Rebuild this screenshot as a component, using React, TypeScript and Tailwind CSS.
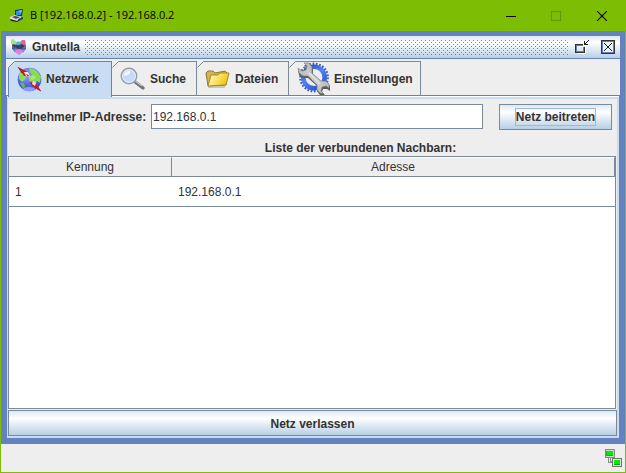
import { useState } from "react";
import type { ReactNode } from "react";

const LaptopIcon = () => (
  <svg width="16" height="16" viewBox="0 0 16 16" aria-hidden="true">
    <path d="M6 2 14 1 13 8 6 8Z" fill="#17365c" />
    <path d="M7 3 13 2 12 7 7 7Z" fill="#2f8fe0" />
    <path d="M9 3 13 2 12 5Z" fill="#7cc4f7" />
    <path d="M1 9 6 7 13 9 8 13 1 11Z" fill="#d9dbe0" />
    <path d="M3 9 6 8 11 9 7 11Z" fill="#4a4a55" />
    <path d="M1 11 8 13 13 9 13 11 8 14 2 13Z" fill="#24242c" />
    <path d="M9 11 14 9 14 11 10 13Z" fill="#16508c" />
  </svg>
);

const GnutellaIcon = () => (
  <svg width="16" height="16" viewBox="0 0 16 16" aria-hidden="true">
    <path d="M1 5 4 4 12 4 15 6 15 10 12 13 4 13 1 10Z" fill="#4a659c" />
    <path d="M0 1 2 0 6 3 6 5 3 6 0 5Z" fill="#a2e394" />
    <path d="M9 3 11 1 14 1 15 5 12 6 9 5Z" fill="#dc6a92" />
    <path d="M5 4 7 2 10 4 8 6 6 6Z" fill="#4fbfc4" />
    <path d="M2 9V6H4V8H2M6 6V10M6 8H8M8 6V10M10 10V6H12V8H10" stroke="#242d55" fill="none" />
    <path d="M1 8H3M13 8H15M4 10H6" stroke="#bd5078" strokeWidth="1.6" />
    <path d="M2 10 5 11 4 14Z" fill="#6f8ed6" />
    <path d="M11 11 14 10 12 14Z" fill="#5e9ab5" />
    <path d="M4 11 8 10 12 11 11 14 8 16 5 14Z" fill="#d981e4" />
  </svg>
);

const GlobeIcon = () => (
  <svg width="26" height="28" viewBox="0 0 26 28" aria-hidden="true">
    <defs>
      <radialGradient id="sea" cx="0.4" cy="0.3" r="0.75">
        <stop offset="0" stopColor="#9aa8fb" />
        <stop offset="0.55" stopColor="#5866ea" />
        <stop offset="1" stopColor="#3c47c8" />
      </radialGradient>
    </defs>
    <circle cx="12.5" cy="14.5" r="11.8" fill="url(#sea)" />
    <ellipse cx="12" cy="24" rx="6" ry="2" fill="#8b9bf8" />
    <path d="M2 9 6 5 10 6 11 9 9 11 8 15 5 17 2 14Z" fill="#86dc52" />
    <path d="M12 3 17 4 21 7 24 12 23 18 20 16 18 20 16 17 12 16 12 12 15 10 13 7Z" fill="#86dc52" />
    <path d="M3 18 7 18 8 22 6 23Z" fill="#68bf43" />
    <path d="M13 12 17 10 19 13 15 15Z" fill="#a6e87b" />
    <path d="M1 2 11 7 12 11 7 11Z" fill="#d81414" />
    <path d="M7 7 11 7 13 12 9 11Z" fill="#f6e9e7" />
    <path d="M9 9 12 10 11 12Z" fill="#d22" />
    <path d="M24 26 15 21 13 17 19 18Z" fill="#d81414" />
    <path d="M16 16 19 18 18 21 15 19Z" fill="#f6e9e7" />
    <path d="M1 2 5 8M20 24 24 26" stroke="#7c1720" strokeWidth="0.8" />
  </svg>
);

const LensIcon = () => (
  <svg width="26" height="24" viewBox="0 0 26 24" aria-hidden="true">
    <path d="M14 14 23 21" stroke="#747474" strokeWidth="3.4" strokeLinecap="round" />
    <path d="M14 13 22 19" stroke="#c4c4c4" strokeWidth="1.3" />
    <circle cx="9" cy="9" r="7.7" fill="#c5dbf8" stroke="#969da6" strokeWidth="1.5" />
    <circle cx="9" cy="9" r="6.3" fill="none" stroke="#e9f2fd" />
    <path d="M4 9A5 5 0 0 1 10 4Q11 8 4 9Z" fill="#f3f8ff" />
  </svg>
);

const FolderIcon = () => (
  <svg width="26" height="20" viewBox="0 0 26 20" aria-hidden="true">
    <defs>
      <linearGradient id="folder" x1="0" y1="0" x2="1" y2="0.4">
        <stop offset="0" stopColor="#fffbd0" />
        <stop offset="0.6" stopColor="#fbe05a" />
        <stop offset="1" stopColor="#f0c419" />
      </linearGradient>
    </defs>
    <path d="M3 17 1 4 3 2 8 2 10 4 20 2 22 4 21 16Z" fill="#cfb45a" stroke="#8f7a35" />
    <path d="M3 17 6 6 13 6 15 4 24 4 21 16Z" fill="url(#folder)" stroke="#a98a22" />
    <path d="M3 18 20 18" stroke="#a5a08c" />
  </svg>
);

const GearIcon = () => (
  <svg width="34" height="34" viewBox="0 0 34 34" aria-hidden="true">
    <defs>
      <linearGradient id="gear" x1="0" y1="0" x2="0.7" y2="1">
        <stop offset="0" stopColor="#2447ac" />
        <stop offset="0.5" stopColor="#5585f3" />
        <stop offset="1" stopColor="#2a57d0" />
      </linearGradient>
      <linearGradient id="steel" x1="0" y1="1" x2="1" y2="0">
        <stop offset="0" stopColor="#8b8b8b" />
        <stop offset="0.5" stopColor="#cccccc" />
        <stop offset="1" stopColor="#969696" />
      </linearGradient>
    </defs>
    <circle cx="17" cy="15.5" r="13.7" fill="none" stroke="#3a5db8" strokeWidth="2.4" strokeDasharray="1.7 1.6" />
    <circle cx="17" cy="15.5" r="10.7" fill="none" stroke="url(#gear)" strokeWidth="4.6" />
    <path
      d="M7 3 12 3 16 7 16 12 24 20 29 20 33 24 33 29 30 27 26 27 25 30 28 33 23 33 20 29 20 24 11 16 6 16 2 13 1 8 5 11 9 10 10 6Z"
      fill="#5c5c5c"
    />
    <path
      d="M7 1 12 1 15 5 15 11 24 19 29 19 32 22 32 26 29 24 25 25 24 29 27 32 23 31 20 28 20 23 11 14 6 14 2 11 1 6 5 9 9 8 10 4Z"
      fill="url(#steel)"
      stroke="#808080"
      strokeWidth="0.7"
    />
    <path d="M12 11 23 22" stroke="#e4e4e4" strokeWidth="1.5" />
  </svg>
);

const NetworkStatusIcon = () => (
  <svg width="18" height="18" viewBox="0 0 18 18" shapeRendering="crispEdges" role="img" aria-label="Verbunden">
    <path d="M3 9h1v4h3v1h-4zM5 9h1v3h2v1h-3z" fill="#8a8a8a" />
    <rect width="10" height="9" fill="#8a8a8a" />
    <rect x="1" y="1" width="8" height="7" fill="#d4d4d4" />
    <rect x="1" y="2" width="7" height="5" fill="#12b012" />
    <rect x="2" y="2" width="6" height="4" fill="#00ee00" />
    <rect x="7" y="9" width="10" height="9" fill="#707070" />
    <rect x="8" y="10" width="8" height="7" fill="#e3e3e3" />
    <rect x="9" y="11" width="6" height="5" fill="#0a0" />
    <rect x="9" y="11" width="6" height="4" fill="#00ee00" />
  </svg>
);

type TabItem = { name: string; icon: ReactNode; size: string };

const tabs: TabItem[] = [
  { name: "Netzwerk", icon: <GlobeIcon />, size: "w-[104px] gap-[3px]" },
  { name: "Suche", icon: <LensIcon />, size: "w-[85px] gap-1" },
  { name: "Dateien", icon: <FolderIcon />, size: "w-[92px] gap-1" },
  { name: "Einstellungen", icon: <GearIcon />, size: "w-[132px] gap-[3px]" },
];

const neighbours = [{ id: "1", address: "192.168.0.1" }];

const steel =
  "border border-[#7a8a99] bg-linear-to-b from-[#dde8f3] via-white via-30% to-[#b8cfe5] font-bold";

export default function App() {
  const [active, setActive] = useState("Netzwerk");
  const [ip, setIp] = useState("192.168.0.1");

  return (
    <div className="flex min-h-screen flex-col border-x border-b border-[#7dbe05] bg-[#eeeeee] font-['Liberation_Sans',Arial,sans-serif] text-xs text-[#333333]">
      <header className="flex h-[31px] items-center bg-[#7dbe05] pl-2 font-['Open_Sans',sans-serif] text-black">
        <LaptopIcon />
        <h1 className="flex-1 pl-[5px] text-[11px]">B [192.168.0.2] - 192.168.0.2</h1>
        <button aria-label="Minimieren" className="flex h-full w-[45px] items-center justify-center">
          <svg width="10" height="10" shapeRendering="crispEdges"><path d="M0 5.5H10" stroke="#000" /></svg>
        </button>
        <button aria-label="Maximieren" disabled className="flex h-full w-[45px] items-center justify-center">
          <svg width="10" height="10" shapeRendering="crispEdges"><rect x="0.5" y="0.5" width="9" height="9" fill="none" stroke="#629504" /></svg>
        </button>
        <button aria-label="Schließen" className="flex h-full w-[47px] items-center justify-center">
          <svg width="10" height="10"><path d="M0 0 10 10M10 0 0 10" stroke="#000" strokeWidth="1.1" /></svg>
        </button>
      </header>

      <main className="flex flex-1 flex-col border-5 border-b-6 border-[#6382bf]">
        <div className="flex h-[23px] items-center border-b border-[#6382bf] bg-linear-to-b from-[#dde8f3] via-white via-30% to-[#b8cfe5] pl-[5px] pr-[5px]">
          <GnutellaIcon />
          <h2 className="w-[57px] pl-[5px] font-bold">Gnutella</h2>
          <svg className="h-4 min-w-0 flex-1" shapeRendering="crispEdges" aria-hidden="true">
            <defs>
              <pattern id="bumps" width="4" height="4" patternUnits="userSpaceOnUse">
                <rect x="1" y="1" width="1" height="1" fill="#6382bf" />
                <rect x="3" y="3" width="1" height="1" fill="#6382bf" />
              </pattern>
            </defs>
            <rect width="100%" height="16" fill="url(#bumps)" />
          </svg>
          <button aria-label="Verkleinern" className="ml-[6px]">
            <svg width="14" height="14" shapeRendering="crispEdges">
              <path d="M2 13.5H11M10.5 5V14" stroke="#fff" fill="none" />
              <path d="M1 4.5H8M0.5 4V13M1 12.5H10M9.5 7V13" stroke="#333" fill="none" />
              <path d="M2 5.5H8M1.5 5V12M2 11.5H9M8.5 7V12" stroke="#6382bf" fill="none" />
              <path d="M9.5 1V5M9 4.5H13" stroke="#222" fill="none" />
              <path d="M10 3h1v1h-1zM11 2h1v1h-1zM12 1h1v1h-1zM13 0h1v1h-1z" fill="#222" />
            </svg>
          </button>
          <button aria-label="Fenster schließen" className="ml-3">
            <svg width="14" height="14" shapeRendering="crispEdges">
              <rect x="0.5" y="0.5" width="13" height="13" fill="none" stroke="#333" />
              <rect x="1.5" y="1.5" width="11" height="11" fill="#eaf1f8" stroke="#6382bf" />
              <path d="M3 3 11 11M11 3 3 11" stroke="#222" strokeWidth="1.2" />
            </svg>
          </button>
        </div>

        <div role="tablist" className="flex pl-[2px] pt-[2px]">
          {tabs.map((tab, index) => {
            const selected = tab.name === active;
            return (
              <button
                key={tab.name}
                role="tab"
                aria-selected={selected}
                onClick={() => setActive(tab.name)}
                className={`relative -mb-[2px] flex h-9 items-center border-r border-t pb-px pl-2 font-bold ${tab.size} ${
                  selected ? "z-10 border-[#6382bf] bg-[#c8ddf2]" : "border-[#7a8a99] bg-[#eeeeee]"
                } ${index === 0 ? "border-l" : ""}`}
              >
                <svg className={`absolute -top-px ${index === 0 ? "-left-px" : "left-0"}`} width="7" height="7" aria-hidden="true">
                  <path d="M0 0H7L0 7Z" fill="#eeeeee" />
                  <path d="M0.5 6.5 6.5 0.5" stroke={selected ? "#6382bf" : "#7a8a99"} />
                </svg>
                {tab.icon}
                {tab.name}
              </button>
            );
          })}
        </div>

        <section role="tabpanel" aria-label={active} className="relative flex flex-1 flex-col border-x border-t border-[#6382bf] bg-white pt-px">
          <div className="flex flex-1 flex-col border-2 border-l border-[#c8ddf2] bg-[#eeeeee]">
            <form className="flex h-[31px] items-stretch pl-[5px] pr-[5px] pt-[5px]" onSubmit={(e) => e.preventDefault()}>
              <label htmlFor="peer" className="w-[138px] self-center font-bold">Teilnehmer IP-Adresse:</label>
              <input
                id="peer"
                value={ip}
                onChange={(e) => setIp(e.target.value)}
                className="mb-px min-w-0 flex-1 border border-[#7a8a99] bg-white pl-px outline-none"
              />
              <button className={`${steel} ml-4 w-[113px]`}>
                <span className="border border-[#a3b8cc] py-px">Netz beitreten</span>
              </button>
            </form>
            <h3 id="list-title" className="mt-[11px] pl-24 text-center font-bold leading-[15px]">Liste der verbundenen Nachbarn:</h3>
            <div className="mr-px flex-1 border border-[#7a8a99] bg-white">
              <table aria-labelledby="list-title" className="w-full table-fixed border-separate border-spacing-0">
                <thead>
                  <tr className="h-5 bg-[#eeeeee]">
                    <th className="w-[163px] border-b border-r border-t border-[#7a8a99] border-t-white p-0 font-normal">Kennung</th>
                    <th className="border-b border-r border-t border-[#7a8a99] border-t-white p-0 font-normal">Adresse</th>
                  </tr>
                </thead>
                <tbody>
                  {neighbours.map((n) => (
                    <tr key={n.id} className="h-[30px]">
                      <td className="border-b border-[#7a8a99] py-0 pl-[6px] pr-0">{n.id}</td>
                      <td className="border-b border-[#7a8a99] py-0 pl-[6px] pr-0">{n.address}</td>
                    </tr>
                  ))}
                </tbody>
              </table>
            </div>
            <button className={`${steel} mt-px h-[26px] pt-px`}>Netz verlassen</button>
          </div>
        </section>
      </main>

      <footer className="flex h-7 items-center justify-end pr-[2px]">
        <NetworkStatusIcon />
      </footer>
    </div>
  );
}
